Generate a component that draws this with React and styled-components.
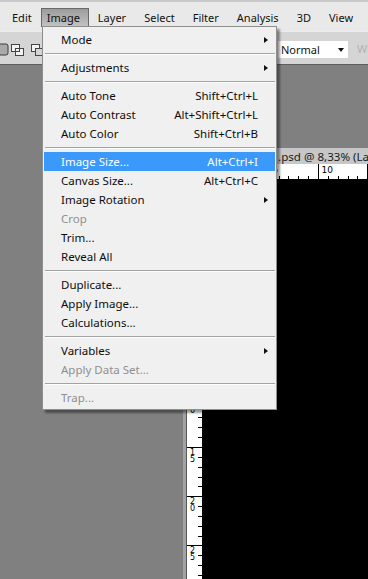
import React from 'react';
import styled, { createGlobalStyle } from 'styled-components';

const GlobalStyle = createGlobalStyle`
  html, body {
    margin: 0;
    padding: 0;
  }
  body {
    font-family: "Noto Sans", "Open Sans", sans-serif;
    background: #808080;
  }
`;

const Screen = styled.div`
  position: relative;
  width: 368px;
  height: 579px;
  overflow: hidden;
  display: flex;
  flex-direction: column;
  background: #808080;
`;

const MenuBar = styled.div`
  height: 29px;
  flex-shrink: 0;
  display: flex;
  align-items: center;
  padding-left: 3px;
  border-top: 2px solid #c8c8c8;
  background: #e9e9e9;
  font-size: 11px;
`;

const BarItem = styled.div`
  height: 18px;
  display: flex;
  align-items: center;
  padding: 0 8px 0 ${p => (p.active ? 5 : 8)}px;
  border: 1px solid ${p => (p.active ? '#6a6a6a' : 'transparent')};
  border-bottom: none;
  margin-top: ${p => (p.active ? 1 : 0)}px;
  background: ${p => (p.active ? 'linear-gradient(#9c9c9c, #c4c4c4)' : 'transparent')};
  color: #111;
`;

const OptionsBar = styled.div`
  height: 34px;
  flex-shrink: 0;
  box-sizing: border-box;
  display: flex;
  align-items: center;
  background: #d5d5d5;
  border-top: 1px solid #ececec;
  border-bottom: 1px solid #5e5e5e;
`;

const Spacer = styled.div`
  flex: 1;
`;

const Select = styled.div`
  width: 70px;
  height: 17px;
  box-sizing: border-box;
  display: flex;
  align-items: center;
  justify-content: space-between;
  padding: 0 4px 0 3px;
  background: #fff;
  font-size: 11px;
  color: #101010;
  margin-top: 2px;
`;

const Caret = styled.span`
  width: 0;
  height: 0;
  border-left: 3.5px solid transparent;
  border-right: 3.5px solid transparent;
  border-top: 4px solid #111;
  margin-top: 2px;
`;

const FadedLabel = styled.div`
  margin-left: 9px;
  width: 11px;
  overflow: hidden;
  white-space: nowrap;
  font-size: 11px;
  color: #b2b2b2;
`;

const Workspace = styled.div`
  flex: 1;
  display: flex;
  padding: 83px 0 0 183px;
  min-height: 0;
`;

const DocWindow = styled.div`
  flex: 1;
  min-width: 0;
  display: flex;
  flex-direction: column;
  border-left: 3px solid #a2a2a2;
  box-shadow: inset 1px 0 0 #575757;
  padding-left: 1px;
`;

const TitleBar = styled.div`
  height: 16px;
  flex-shrink: 0;
  display: flex;
  align-items: center;
  padding-left: 37px;
  background: #c7c7c7;
  font-size: 11.6px;
  color: #1a1a1a;
  white-space: nowrap;
  overflow: hidden;
`;

const DocBody = styled.div`
  flex: 1;
  min-height: 0;
  display: grid;
  grid-template-columns: 15px minmax(0, 1fr);
  grid-template-rows: 15px minmax(0, 1fr);
`;

const Corner = styled.div`
  background: #fff;
`;

const RulerBox = styled.div`
  background: #fff;
  overflow: hidden;
  min-height: 0;
  svg {
    display: block;
  }
`;

const Canvas = styled.div`
  background: #000;
`;

const Menu = styled.div`
  position: absolute;
  left: 42px;
  top: 26px;
  width: 235px;
  box-sizing: border-box;
  padding: 3px 1px 2px;
  border: 1px solid #8e8e8e;
  background: #f0f0f0;
  box-shadow: 3px 3px 2px rgba(0, 0, 0, 0.4);
  font-size: 11.5px;
  z-index: 5;
`;

const Row = styled.div`
  height: 19px;
  display: flex;
  align-items: center;
  background: ${p => (p.highlight ? '#3a99fb' : 'transparent')};
  color: ${p => (p.highlight ? '#fff' : p.disabled ? '#8f8f8f' : '#0d0d0d')};
  white-space: nowrap;
`;

const Label = styled.span`
  flex: 1;
  padding-left: 17px;
`;

const Shortcut = styled.span``;

const ArrowSlot = styled.span`
  width: 17px;
  display: flex;
  align-items: center;
  padding-left: 6px;
  box-sizing: border-box;
`;

const Arrow = styled.span`
  width: 0;
  height: 0;
  border-top: 3.5px solid transparent;
  border-bottom: 3.5px solid transparent;
  border-left: 4px solid #111;
`;

const Separator = styled.div`
  height: 9px;
  display: flex;
  flex-direction: column;
  justify-content: center;
  margin-left: 1px;
  &::before {
    content: '';
    height: 1px;
    background: #a3a3a3;
  }
  &::after {
    content: '';
    height: 1px;
    background: #fdfdfd;
  }
`;

const menuBarItems = ['Edit', 'Image', 'Layer', 'Select', 'Filter', 'Analysis', '3D', 'View'];

const menu = [
  { label: 'Mode', sub: true },
  '-',
  { label: 'Adjustments', sub: true },
  '-',
  { label: 'Auto Tone', key: 'Shift+Ctrl+L' },
  { label: 'Auto Contrast', key: 'Alt+Shift+Ctrl+L' },
  { label: 'Auto Color', key: 'Shift+Ctrl+B' },
  '-',
  { label: 'Image Size...', key: 'Alt+Ctrl+I', highlight: true },
  { label: 'Canvas Size...', key: 'Alt+Ctrl+C' },
  { label: 'Image Rotation', sub: true },
  { label: 'Crop', disabled: true },
  { label: 'Trim...' },
  { label: 'Reveal All' },
  '-',
  { label: 'Duplicate...' },
  { label: 'Apply Image...' },
  { label: 'Calculations...' },
  '-',
  { label: 'Variables', sub: true },
  { label: 'Apply Data Set...', disabled: true },
  '-',
  { label: 'Trap...', disabled: true },
];

const SelectionModes = () => (
  <svg width="44" height="16" viewBox="0 0 44 16" style={{ marginTop: 4 }}>
    <rect x="-4" y="2" width="12" height="11" rx="2" fill="#a9a9a9" stroke="#3c3c3c" />
    <rect x="11.5" y="2.5" width="8" height="7" fill="#f2f2f2" stroke="#444" />
    <rect x="15.5" y="6.5" width="8" height="7" fill="#f2f2f2" stroke="#444" />
    <rect x="11.5" y="2.5" width="8" height="7" fill="none" stroke="#444" />
    <rect x="31.5" y="2.5" width="8" height="7" fill="#f2f2f2" stroke="#444" />
    <rect x="35.5" y="6.5" width="8" height="7" fill="#d5d5d5" stroke="#444" />
  </svg>
);

// pixels per ruler unit, and where 0 falls in each ruler
const UNIT = 9.84;
const TOP_ZERO = 17.6;
const LEFT_ZERO = 120.4;

const TopRuler = () => {
  const marks = [];
  for (let k = -1; k <= 17; k++) {
    const x = Math.round(TOP_ZERO + UNIT * k) + 0.5;
    const major = k % 5 === 0;
    marks.push(
      <line key={k} x1={x} x2={x} y1={major ? 0 : 12} y2={15} stroke="#000" />
    );
    if (major && k >= 0) {
      marks.push(
        <text key={'t' + k} x={x + 3} y={9} fontSize="9" fontFamily="DejaVu Sans, sans-serif" fill="#000">
          {k}
        </text>
      );
    }
  }
  return (
    <svg width="200" height="15">
      {marks}
    </svg>
  );
};

const LeftRuler = () => {
  const marks = [];
  for (let v = -13; v <= 30; v++) {
    const y = Math.round(LEFT_ZERO + UNIT * v) + 0.5;
    if (y < 0) continue;
    const major = v % 5 === 0;
    marks.push(
      <line key={v} x1={major ? 0 : 11} x2={15} y1={y} y2={y} stroke="#000" />
    );
    if (major && v > 0) {
      marks.push(
        <text key={'t' + v} fontSize="8" fontFamily="DejaVu Sans, sans-serif" fill="#000">
          {String(v).split('').map((d, i) => (
            <tspan key={i} x={3} y={y + 7 + 7 * i}>
              {d}
            </tspan>
          ))}
        </text>
      );
    }
  }
  return (
    <svg width="15" height="420">
      {marks}
    </svg>
  );
};

export default function App() {
  return (
    <Screen>
      <GlobalStyle />
      <MenuBar>
        {menuBarItems.map(item => (
          <BarItem key={item} active={item === 'Image'}>
            {item}
          </BarItem>
        ))}
      </MenuBar>
      <OptionsBar>
        <SelectionModes />
        <Spacer />
        <Select>
          Normal
          <Caret />
        </Select>
        <FadedLabel>Width:</FadedLabel>
      </OptionsBar>
      <Workspace>
        <DocWindow>
          <TitleBar>Untitled-1.psd @ 8,33% (Layer 1, RGB/8) *</TitleBar>
          <DocBody>
            <Corner />
            <RulerBox>
              <TopRuler />
            </RulerBox>
            <RulerBox>
              <LeftRuler />
            </RulerBox>
            <Canvas />
          </DocBody>
        </DocWindow>
      </Workspace>
      <Menu>
        {menu.map((item, i) =>
          item === '-' ? (
            <Separator key={i} />
          ) : (
            <Row key={i} highlight={item.highlight} disabled={item.disabled}>
              <Label>{item.label}</Label>
              {item.key && <Shortcut>{item.key}</Shortcut>}
              <ArrowSlot>{item.sub && <Arrow />}</ArrowSlot>
            </Row>
          )
        )}
      </Menu>
    </Screen>
  );
}
